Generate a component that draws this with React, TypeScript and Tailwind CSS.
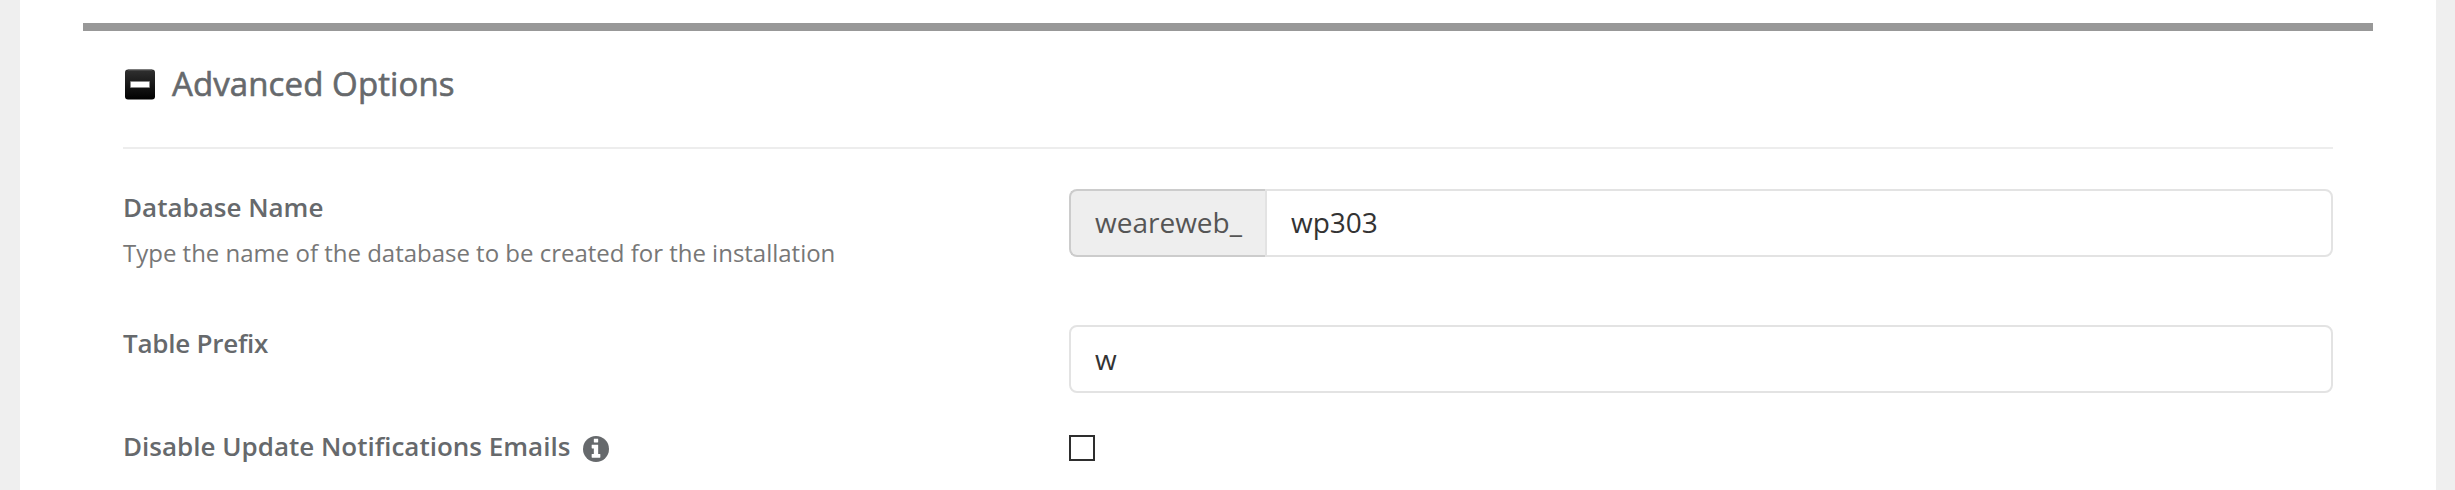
import React, { useState } from 'react';

const CollapseIcon: React.FC = () => (
  <svg className="ml-[2px] w-[30px] h-[31px]" viewBox="0 0 30 31" xmlns="http://www.w3.org/2000/svg">
    <defs>
      <linearGradient id="collapseFill" x1="0" y1="0" x2="0" y2="1">
        <stop offset="0" stopColor="#303030" />
        <stop offset="1" stopColor="#000000" />
      </linearGradient>
    </defs>
    <rect y="0.5" width="30" height="30" rx="3" fill="url(#collapseFill)" />
    <path d="M3 0.9h24" stroke="#6a6a6a" strokeWidth="1" />
    <rect x="5" y="12" width="20" height="7" rx="1" fill="#8a8a8a" />
    <rect x="6" y="13" width="18" height="5" fill="#ffffff" />
  </svg>
);

const InfoIcon: React.FC = () => (
  <svg className="ml-[13px] mt-[6px] w-[26px] h-[26px]" viewBox="0 128 1536 1536" xmlns="http://www.w3.org/2000/svg">
    <circle cx="768" cy="896" r="768" fill="#66696c" />
    <path
      fill="#ffffff"
      d="M1024 1376v-160q0-14-9-23t-23-9h-96v-512q0-14-9-23t-23-9h-320q-14 0-23 9t-9 23v160q0 14 9 23t23 9h96v320h-96q-14 0-23 9t-9 23v160q0 14 9 23t23 9h448q14 0 23-9t9-23zM896 480v-160q0-14-9-23t-23-9h-192q-14 0-23 9t-9 23v160q0 14 9 23t23 9h192q14 0 23-9t9-23z"
    />
  </svg>
);

interface FieldRowProps {
  label: string;
  help?: string;
  info?: boolean;
  className?: string;
  labelClassName?: string;
  children: React.ReactNode;
}

const FieldRow: React.FC<FieldRowProps> = ({ label, help, info, className, labelClassName, children }) => (
  <div className={`flex ${className || ''}`}>
    <div className="w-[946px] shrink-0">
      <div className="flex items-center h-9">
        <span className={`text-[26px] leading-9 font-semibold text-[#66696c] whitespace-nowrap ${labelClassName || ''}`}>
          {label}
        </span>
        {info && <InfoIcon />}
      </div>
      {help && <p className="mt-[10px] text-[24px] leading-9 tracking-[-0.01px] text-[#777777] whitespace-nowrap">{help}</p>}
    </div>
    <div className="flex-1">{children}</div>
  </div>
);

const App: React.FC = () => {
  const [dbName, setDbName] = useState('wp303');
  const [prefix, setPrefix] = useState('w');
  const [disableEmails, setDisableEmails] = useState(false);

  return (
    <div className="h-[490px] bg-[#efefef] pl-5 pr-[19px] overflow-hidden font-['Open_Sans',sans-serif]">
      <main className="h-full bg-white pt-[23px] px-[63px]">
        <div className="h-2 bg-[#989898]" />

        <section className="px-10">
          {/* Section title */}
          <div className="flex items-center h-[118px] pb-[10px] border-b-2 border-[#ededed]">
            <CollapseIcon />
            <h2 className="ml-[17px] text-[33px] leading-[48px] text-[#66696c] [-webkit-text-stroke:0.6px_#66696c] whitespace-nowrap tracking-[0.1px]">
              Advanced Options
            </h2>
          </div>

          <div className="mt-10">
            <FieldRow
              label="Database Name"
              help="Type the name of the database to be created for the installation"
              className="h-[136px]"
            >
              <div className="flex h-[68px]">
                <span className="w-[196px] shrink-0 border-2 border-r-0 border-[#cccccc] rounded-l-lg bg-[#eeeeee] pl-6 text-[28px] leading-[62px] text-[#555555]">
                  weareweb_
                </span>
                <input
                  type="text"
                  value={dbName}
                  onChange={(e) => setDbName(e.target.value)}
                  className="flex-1 border-2 border-[#e3e3e3] rounded-r-lg bg-white pl-6 pb-[2px] text-[28px] text-[#333333] outline-none"
                />
              </div>
            </FieldRow>

            <FieldRow label="Table Prefix" className="h-[103px]" labelClassName="tracking-[-0.25px]">
              <input
                type="text"
                value={prefix}
                onChange={(e) => setPrefix(e.target.value)}
                className="block w-full h-[68px] border-2 border-[#e3e3e3] rounded-lg bg-white pl-6 text-[28px] text-[#333333] outline-none"
              />
            </FieldRow>

            <FieldRow label="Disable Update Notifications Emails" info>
              <input
                type="checkbox"
                checked={disableEmails}
                onChange={(e) => setDisableEmails(e.target.checked)}
                className="block mt-[7px] w-[26px] h-[26px] appearance-none border-2 border-[#2e2e2e] bg-white checked:bg-[#2e2e2e]"
              />
            </FieldRow>
          </div>
        </section>
      </main>
    </div>
  );
};

export default App;
